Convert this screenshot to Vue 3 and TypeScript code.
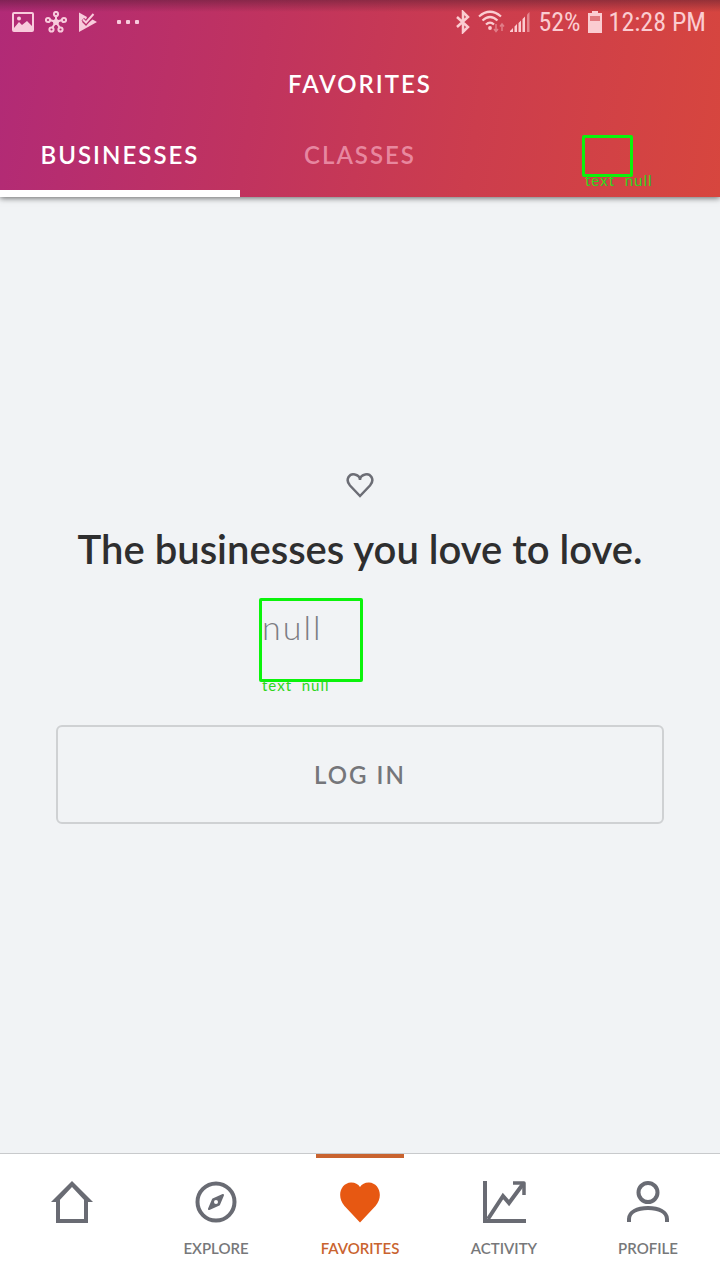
<script setup lang="ts">
import { ref } from 'vue'

interface Item {
  id: string
  label: string
}

const tabs: Item[] = [
  { id: 'businesses', label: 'BUSINESSES' },
  { id: 'classes', label: 'CLASSES' },
  { id: 'more', label: '' },
]
const nav: Item[] = [
  { id: 'home', label: '' },
  { id: 'explore', label: 'EXPLORE' },
  { id: 'favorites', label: 'FAVORITES' },
  { id: 'activity', label: 'ACTIVITY' },
  { id: 'profile', label: 'PROFILE' },
]
const activeTab = ref('businesses')
const activeNav = ref('favorites')
</script>

<template>
  <div class="app">
    <header class="header">
      <div class="status">
        <svg class="status-icon" width="22" height="20" viewBox="0 0 22 20">
          <rect x="1" y="1" width="20" height="18" rx="1" fill="none" stroke="currentColor" stroke-width="2" />
          <circle cx="7" cy="6.500" r="2" fill="currentColor" />
          <path d="M2 16 7 10l3 3 5-4 5 5v4H2z" fill="currentColor" />
        </svg>
        <svg class="status-icon" width="22" height="22" viewBox="0 0 22 22" fill="none" stroke="currentColor" stroke-width="2">
          <path d="M11 11V5M11 11 5 9M11 11l6-2M11 11l-4 6M11 11l4 6" />
          <circle cx="11" cy="3" r="2.100" /><circle cx="3" cy="9" r="2.100" /><circle cx="19" cy="9" r="2.100" />
          <circle cx="6.500" cy="18.500" r="2.100" /><circle cx="15.500" cy="18.500" r="2.100" />
          <circle cx="11" cy="11" r="2" />
        </svg>
        <svg class="status-icon" width="20" height="22" viewBox="0 0 20 22">
          <path d="M1 1.500 9 6 8 8.500 6 7 3.500 9.500 8 14 14.500 8.500 19 11 1 21z" fill="currentColor" />
          <path d="m4.500 8.500 3.500 3.500 7.500-9" fill="none" stroke="#b82e6c" stroke-width="1.200" transform="translate(0 2)" />
          <path d="m5 8.500 3 3 7.500-8.500" fill="none" stroke="currentColor" stroke-width="2" />
        </svg>
        <svg class="dots" width="24" height="4" viewBox="0 0 24 4" fill="currentColor">
          <rect width="4" height="4" rx="1" /><rect x="9" width="4" height="4" rx="1" /><rect x="18" width="4" height="4" rx="1" />
        </svg>
        <div class="status-right">
          <svg width="16" height="24" viewBox="0 0 16 24" fill="none" stroke="currentColor" stroke-width="2.500">
            <path d="m2 7 11 10-5 5V2l5 5L2 17" />
          </svg>
          <svg width="28" height="24" viewBox="0 0 28 24" fill="none" stroke="currentColor" stroke-width="2.200">
            <path d="M1 6.500q11-9.500 22 0M4.500 10.500q7.500-7 15 0M8 14.500q4-4 8 0" />
            <circle cx="12" cy="18" r="1.900" fill="currentColor" stroke="none" />
            <path d="M18 14v7m-2-2 2 2.500 2-2.500M24 21v-7m-2 2.500 2-2.500 2 2.500" stroke-width="1.500" opacity=".45" />
          </svg>
          <svg width="22" height="22" viewBox="0 0 22 22" fill="currentColor">
            <path d="M1 21v-1l3-3v4zM5.500 21v-5.500L8 13v8zM9.500 21v-9l2.500-2.500V21zM13.500 21V8L16 5.500V21z" />
            <path d="M18 21V3.500L20.500 1v20z" opacity=".5" />
          </svg>
          <span class="status-text battery-text">52%</span>
          <svg width="14" height="22" viewBox="0 0 14 22" fill="currentColor">
            <path d="M4 0h6v2h4v20H0V2h4z" opacity=".4" />
            <path d="M4 0h6v2h4v20H0V2h4zM2 5v5h10V5z" fill-rule="evenodd" />
          </svg>
          <span class="status-text">12:28 PM</span>
        </div>
      </div>
      <h1 class="title">FAVORITES</h1>
      <nav class="tabs" aria-label="Favorites">
        <button
          v-for="tab in tabs"
          :key="tab.id"
          type="button"
          class="tab"
          :class="{ active: tab.id === activeTab }"
          @click="activeTab = tab.id"
        >
          {{ tab.label }}
          <span v-if="!tab.label" class="marker tab-marker"><span class="marker-label">text&nbsp; null</span></span>
        </button>
      </nav>
    </header>

    <main class="main">
      <svg class="heart" width="28" height="26" viewBox="0 0 28 26">
        <path d="M14 24 4 13.500C-1.500 7 4 1 9 2.500c3 .8 5 3 5 5.500 0-2.500 2-4.700 5-5.500 5-1.500 10.500 4.500 5 11z" fill="none" stroke="#6c6d75" stroke-width="2.500" />
      </svg>
      <h2 class="heading">The businesses you love to love.</h2>
      <div class="marker message">
        <p class="message-text">null</p>
        <span class="marker-label">text&nbsp; null</span>
      </div>
      <button type="button" class="login">LOG IN</button>
    </main>

    <nav class="bottom" aria-label="Main">
      <button
        v-for="item in nav"
        :key="item.id"
        type="button"
        class="nav-item"
        :class="{ active: item.id === activeNav }"
        @click="activeNav = item.id"
      >
        <svg width="44" height="44" viewBox="0 0 44 44" fill="none" stroke="currentColor" stroke-width="4">
          <template v-if="item.id === 'home'">
            <path d="M8 20v21h28V20" />
            <path d="M1 22 22 1l21 21h-7L22 7 8 22z" fill="currentColor" stroke="none" />
          </template>
          <template v-else-if="item.id === 'explore'">
            <circle cx="22" cy="22" r="18.500" />
            <path d="M29 15 25 24.500 15 29l4-9.500z" fill="currentColor" stroke-width="2" stroke-linejoin="round" />
            <circle cx="22" cy="22" r="2" fill="#fff" stroke="none" />
          </template>
          <path
            v-else-if="item.id === 'favorites'"
            d="M22 42.500 6.500 26C-2 16 3 3 13 2.500c4-.1 7 1.500 9 4.500 2-3 5-4.600 9-4.500C41 3 46 16 37.500 26z"
            fill="#e75812"
            stroke="none"
          />
          <template v-else-if="item.id === 'activity'">
            <path d="M3 1v40h41" />
            <path d="m6 39 15-23 6 7L41 4" />
            <path d="M31 3h11v12" stroke-width="3.500" stroke-linejoin="round" />
          </template>
          <template v-else>
            <circle cx="22" cy="12.500" r="9.500" />
            <path d="M3 42v-3c0-7 8-11 19-11s19 4 19 11v3" />
          </template>
        </svg>
        <span class="nav-label">{{ item.label }}</span>
      </button>
    </nav>
  </div>
</template>

<style>
body {
  margin: 0;
}
</style>

<style scoped>
.app {
  display: flex;
  flex-direction: column;
  min-height: 100vh;
  background: #f1f3f5;
  font-family: Lato, "Open Sans", sans-serif;
}
button {
  margin: 0;
  padding: 0;
  border: 0;
  background: none;
  font-family: inherit;
  cursor: pointer;
}
.header {
  position: relative;
  background:
    linear-gradient(rgba(70, 25, 45, 0.45), rgba(70, 25, 45, 0) 12px),
    linear-gradient(100deg, #b12a77 0%, #c0335f 36%, #cc3d4d 66%, #d7463e 100%);
  box-shadow: 0 1px 6px rgba(0, 0, 0, 0.6);
}
.status {
  display: flex;
  align-items: center;
  height: 44px;
  padding: 0 14px 0 12px;
  color: #f8cbdc;
}
.status-icon {
  margin-right: 11px;
}
.dots {
  margin-left: 8px;
}
.status-right {
  display: flex;
  align-items: center;
  gap: 7px;
  margin-left: auto;
  color: #fbccd1;
}
.status-right svg:nth-child(3) {
  margin-left: -4px;
}
.status-text {
  font-family: "Roboto Condensed", Roboto, sans-serif;
  font-size: 26px;
  line-height: 28px;
}
.title {
  margin: 0;
  color: #fff;
  font-size: 24px;
  font-weight: 600;
  line-height: 80px;
  letter-spacing: 2px;
  text-align: center;
}
.tabs {
  display: grid;
  grid-template-columns: repeat(3, 1fr);
  height: 73px;
}
.tab {
  position: relative;
  padding-bottom: 6px;
  border-bottom: 7px solid transparent;
  color: rgba(255, 190, 210, 0.6);
  font-size: 24px;
  font-weight: 600;
  letter-spacing: 2px;
}
.tab.active {
  border-bottom-color: #fff;
  color: #fff;
}
.marker {
  box-sizing: border-box;
  border: 3px solid #0bf30b;
  border-radius: 2px;
}
.marker-label {
  position: absolute;
  top: 100%;
  left: 0;
  color: #2fd51d;
  font-size: 15px;
  font-weight: 400;
  line-height: 12px;
  letter-spacing: 1px;
  white-space: nowrap;
}
.tab-marker {
  position: absolute;
  top: 11px;
  left: 102px;
  width: 51px;
  height: 42px;
}
.main {
  display: flex;
  flex: 1;
  flex-direction: column;
  align-items: center;
  justify-content: center;
  padding: 0 56px 54px;
}
.heading {
  margin: 24px 0 22px;
  color: #2e2e2f;
  font-size: 40px;
  font-weight: 600;
  line-height: 54px;
  white-space: nowrap;
}
.message {
  position: relative;
  width: 104px;
  height: 84px;
  margin-right: 98px;
}
.message-text {
  margin: 2px 0 0;
  color: #7c7d83;
  font-size: 34px;
  font-weight: 300;
  line-height: 48px;
  letter-spacing: 2px;
}
.login {
  width: 100%;
  height: 99px;
  margin-top: 43px;
  border: 2px solid #cfd1d3;
  border-radius: 6px;
  color: #75767a;
  font-size: 24px;
  font-weight: 600;
  letter-spacing: 2px;
}
.bottom {
  display: grid;
  grid-template-columns: repeat(5, 1fr);
  height: 126px;
  border-top: 1px solid #c8cacc;
  background: #fff;
}
.nav-item {
  position: relative;
  display: flex;
  flex-direction: column;
  align-items: center;
  gap: 14px;
  padding-top: 26px;
  color: #696b73;
}
.nav-item.active::before {
  content: "";
  position: absolute;
  top: 0;
  width: 88px;
  height: 4px;
  background: #c9632f;
}
.nav-label {
  color: #77787a;
  font-size: 15px;
  font-weight: 600;
  line-height: 20px;
}
.nav-item.active .nav-label {
  color: #c9632f;
}
</style>
